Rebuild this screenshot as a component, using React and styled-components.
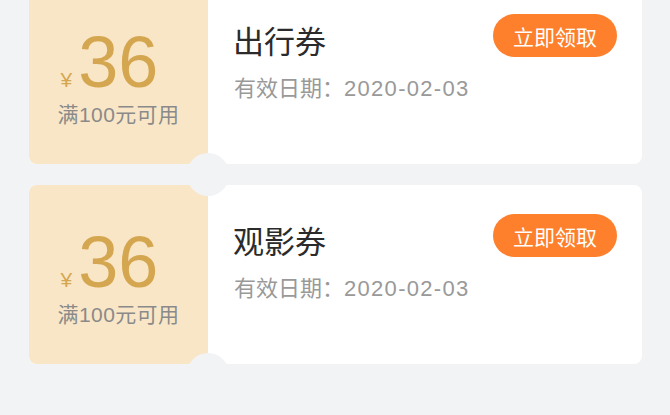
import React from "react";
import styled, { createGlobalStyle } from "styled-components";

const GlobalStyle = createGlobalStyle`
  html, body {
    margin: 0;
    padding: 0;
    background: #f2f3f5;
  }
  body {
    font-family: "Liberation Sans", "Noto Sans CJK SC", sans-serif;
    overflow: hidden;
  }
`;

const Page = styled.div`
  width: 670px;
  height: 415px;
  overflow: hidden;
  background: #f2f3f5;
`;

const List = styled.div`
  display: flex;
  flex-direction: column;
  gap: 21px;
  padding: 0 28px 0 29px;
  margin-top: -15px;
`;

const Card = styled.div`
  position: relative;
  display: flex;
  height: 179px;
  border-radius: 8px;
  background: #fff;
  overflow: hidden;

  &::before,
  &::after {
    content: "";
    position: absolute;
    left: 158px;
    width: 42px;
    height: 42px;
    border-radius: 50%;
    background: #f2f3f5;
  }
  &::before {
    top: -31px;
  }
  &::after {
    bottom: -31px;
  }
`;

const Amount = styled.div`
  width: 179px;
  flex: none;
  background: #f9e6c6;
  display: flex;
  flex-direction: column;
  align-items: center;
  padding-top: 41px;
  box-sizing: border-box;
`;

const Price = styled.div`
  display: flex;
  align-items: baseline;
  color: #d5a650;
  margin-left: -18px;
`;

const Yen = styled.span`
  font-size: 21px;
  line-height: 1;
  margin-right: 6px;
`;

const Value = styled.span`
  font-size: 72px;
  line-height: 72px;
`;

const Condition = styled.div`
  margin-top: 4px;
  font-size: 21px;
  line-height: 26px;
  color: #8a8a8a;
  letter-spacing: 0.4px;
`;

const Body = styled.div`
  flex: 1;
  display: flex;
  justify-content: space-between;
  align-items: flex-start;
  padding: 29px 25px 0 26px;
`;

const Info = styled.div`
  display: flex;
  flex-direction: column;
  padding-top: 6px;
`;

const Title = styled.div`
  font-family: "Noto Sans CJK SC", sans-serif;
  font-size: 31px;
  font-weight: 400;
  line-height: 40px;
  color: #2b2b2b;
  margin-left: -1px;
`;

const Date = styled.div`
  margin-top: 14px;
  font-size: 22px;
  line-height: 30px;
  color: #999;
`;

const DateValue = styled.span`
  letter-spacing: 1.3px;
`;

const Claim = styled.button`
  width: 124px;
  height: 43px;
  border: none;
  border-radius: 22px;
  background: #fe7f2c;
  color: #fff;
  font-family: "Noto Sans CJK SC", sans-serif;
  font-size: 21px;
  padding: 0;
  cursor: pointer;
`;

const coupons = [
  { title: "出行券", value: 36, min: 100, date: "2020-02-03" },
  { title: "观影券", value: 36, min: 100, date: "2020-02-03" },
];

export default function App() {
  return (
    <Page>
      <GlobalStyle />
      <List>
        {coupons.map((c, i) => (
          <Card key={i}>
            <Amount>
              <Price>
                <Yen>¥</Yen>
                <Value>{c.value}</Value>
              </Price>
              <Condition>满{c.min}元可用</Condition>
            </Amount>
            <Body>
              <Info>
                <Title>{c.title}</Title>
                <Date>
                  有效日期：<DateValue>{c.date}</DateValue>
                </Date>
              </Info>
              <Claim>立即领取</Claim>
            </Body>
          </Card>
        ))}
      </List>
    </Page>
  );
}
